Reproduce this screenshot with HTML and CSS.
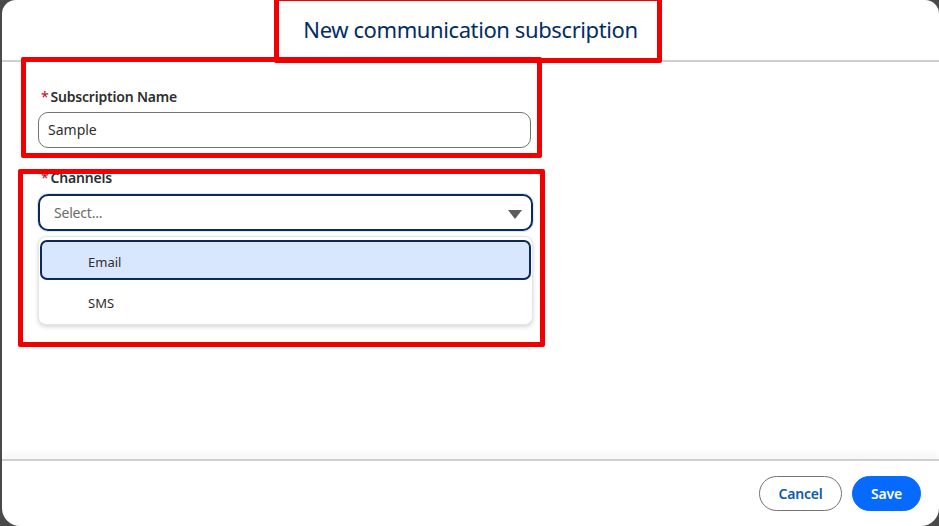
FILE: index.html
```html
<!DOCTYPE html>
<html lang="en">
<head>
<meta charset="utf-8">
<title>New communication subscription</title>
<link rel="stylesheet" href="styles.css">
</head>
<body>
<div class="modal">
  <header class="modal-header">
    <h2 class="modal-title">New communication subscription</h2>
  </header>
  <main class="modal-body">
    <div class="field">
      <label class="field-label"><abbr class="req">*</abbr>Subscription Name</label>
      <div class="input">Sample</div>
    </div>
    <div class="field field-channels">
      <label class="field-label"><abbr class="req">*</abbr>Channels</label>
      <div class="combobox">
        <span class="placeholder">Select...</span>
        <svg class="caret" width="14" height="9" viewBox="0 0 14 9"><path d="M0 0 H14 L7 9 Z" fill="#5c5c5c"/></svg>
      </div>
      <ul class="listbox">
        <li class="option option-active">Email</li>
        <li class="option">SMS</li>
      </ul>
    </div>
  </main>
  <footer class="modal-footer">
    <button class="btn btn-neutral">Cancel</button>
    <button class="btn btn-brand">Save</button>
  </footer>
  <div class="mark mark-title"></div>
  <div class="mark mark-name"></div>
  <div class="mark mark-channels"></div>
</div>
</body>
</html>
```
FILE: styles.css
```css
*, *::before, *::after {
  box-sizing: border-box;
}

html, body {
  margin: 0;
  padding: 0;
  height: 100%;
  overflow: hidden;
  background: #4a4a4a;
  font-family: "Noto Sans", "Open Sans", sans-serif;
}

.modal {
  position: relative;
  margin-left: 2px;
  width: 937px;
  height: 526px;
  background: #ffffff;
  border-radius: 14px 14px 18px 18px;
  display: flex;
  flex-direction: column;
  overflow: hidden;
}

.modal-header {
  height: 62px;
  border-bottom: 2px solid #cfcfcf;
  display: flex;
  align-items: center;
  justify-content: center;
  flex-shrink: 0;
}

.modal-title {
  margin: 0 0 2px 0;
  font-size: 22px;
  font-weight: 400;
  color: #032d60;
  letter-spacing: -0.4px;
}

.modal-body {
  flex: 1;
  padding: 26px 0 0 36px;
}

.field {
  width: 493px;
}

.field-channels {
  margin-top: 21px;
  width: 495px;
}

.field-label {
  display: block;
  font-size: 14px;
  font-weight: 600;
  color: #2e2e2e;
  line-height: 18px;
  margin: 0 0 6px 3px;
  letter-spacing: -0.2px;
}

.field-channels .field-label {
  margin-bottom: 7px;
}

.req {
  color: #ba0517;
  text-decoration: none;
  border: 0;
  margin-right: 2px;
  font-weight: 400;
}

.input {
  height: 36px;
  border: 1px solid #747474;
  border-radius: 10px;
  padding: 0 9px;
  font-size: 14px;
  line-height: 34px;
  color: #2e2e2e;
}

.combobox {
  height: 37px;
  border: 2px solid #0b2a5a;
  border-radius: 10px;
  padding: 0 9px 0 14px;
  display: flex;
  align-items: center;
  justify-content: space-between;
  box-shadow: 0 0 0 1px #d8e6fe;
}

.placeholder {
  font-size: 14px;
  color: #6b6b6b;
  letter-spacing: -0.2px;
}

.caret {
  margin-top: 4px;
}

.listbox {
  list-style: none;
  margin: 5px 0 0 0;
  padding: 3px 1px 3px 1px;
  background: #fff;
  border: 1px solid #e5e5e5;
  border-radius: 8px;
  box-shadow: 0 2px 4px rgba(0, 0, 0, 0.16);
}

.option {
  height: 40px;
  margin-bottom: 1px;
  border: 2px solid transparent;
  border-radius: 7px;
  padding: 3px 0 0 46px;
  display: flex;
  align-items: center;
  font-size: 13px;
  color: #2e2e2e;
}

.option:last-child {
  margin-bottom: 0;
}

.option-active {
  background: #d8e6fe;
  border-color: #0b2a5a;
}

.modal-footer {
  height: 67px;
  border-top: 2px solid #cfcfcf;
  box-shadow: 0 -6px 8px rgba(0, 0, 0, 0.035);
  display: flex;
  justify-content: flex-end;
  align-items: flex-start;
  gap: 10px;
  padding: 15px 18px 0 0;
  flex-shrink: 0;
}

.btn {
  height: 35px;
  border-radius: 18px;
  font-family: inherit;
  font-size: 14px;
  font-weight: 600;
  padding: 0;
  cursor: pointer;
  letter-spacing: -0.2px;
}

.btn-neutral {
  width: 83px;
  background: #fff;
  border: 1px solid #747474;
  color: #0b5cab;
}

.btn-brand {
  width: 69px;
  background: #066afe;
  border: 1px solid #066afe;
  color: #fff;
}

.mark {
  position: absolute;
  border: 5px solid #f00000;
  border-radius: 2px;
  pointer-events: none;
}

.mark-title {
  left: 272px;
  top: -4px;
  width: 388px;
  height: 67px;
}

.mark-name {
  left: 19px;
  top: 57px;
  width: 521px;
  height: 101px;
}

.mark-channels {
  left: 16px;
  top: 169px;
  width: 527px;
  height: 178px;
}
```
